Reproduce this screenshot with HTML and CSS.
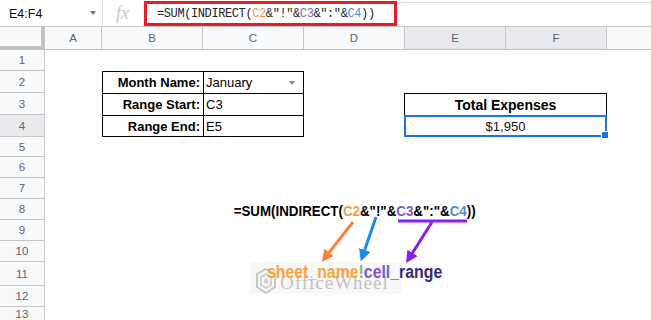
FILE: index.html
```html
<!DOCTYPE html>
<html>
<head>
<meta charset="utf-8">
<link rel="stylesheet" href="styles.css">
</head>
<body>
<div class="topbar">
  <div class="namebox"><span class="nb-text">E4:F4</span><span class="nb-caret"></span></div>
  <div class="fxbox"><span class="fx">fx</span></div>
  <div class="formula">
    <span class="ftext">=SUM(INDIRECT(<span class="c-or">C2</span>&amp;"!"&amp;<span class="c-pu">C3</span>&amp;":"&amp;<span class="c-bl">C4</span>))</span>
  </div>
</div>
<div class="sheet">
  <div class="corner"></div>
  <div class="ch">A</div>
  <div class="ch">B</div>
  <div class="ch">C</div>
  <div class="ch">D</div>
  <div class="ch sel">E</div>
  <div class="ch sel">F</div>
  <div class="ch last"></div>

  <div class="rh r1">1</div>
  <div class="rh r2">2</div>
  <div class="rh r3">3</div>
  <div class="rh r4 sel">4</div>
  <div class="rh r5">5</div>
  <div class="rh r6">6</div>
  <div class="rh r7">7</div>
  <div class="rh r8">8</div>
  <div class="rh r9">9</div>
  <div class="rh r10">10</div>
  <div class="rh r11">11</div>
  <div class="rh r12">12</div>
  <div class="rh r13">13</div>

  <div class="tc lbl row2">Month Name:</div>
  <div class="tc val vcol row2 drop">January<span class="dd"></span></div>
  <div class="tc lbl row3">Range Start:</div>
  <div class="tc val vcol row3">C3</div>
  <div class="tc lbl row4 lastrow">Range End:</div>
  <div class="tc val vcol row4 lastrow">E5</div>

  <div class="total-h">Total Expenses</div>
  <div class="total-v">$1,950<span class="handle"></span></div>

  <div class="annot">
    <div class="watermark">
      <svg class="wm-logo" width="20" height="26" viewBox="0 0 20 26">
        <path d="M10 1 L19 6 L19 19 L10 25 L1 19 L1 6 Z" fill="none" stroke="#bcbcbc" stroke-width="2"/>
        <path d="M10 6 L15 9 L15 17 L10 20 L5 17 L5 9 Z" fill="none" stroke="#c8c8c8" stroke-width="2"/>
        <path d="M10 10 L12 11.5 L12 15 L10 16 L8 15 L8 11.5 Z" fill="#cacaca"/>
      </svg>
      <span class="wm-text">OfficeWheel</span>
    </div>
    <div class="big-formula"><span class="bf-inner">=SUM(INDIRECT(<span class="b-or">C2</span>&amp;"!"&amp;<span class="b-pu">C3</span>&amp;":"&amp;<span class="b-bl">C4</span>))</span></div>
    <div class="spacer"></div>
    <div class="syntax"><span class="sx-inner"><span class="s-or">sheet</span><span class="s-or">_</span><span class="s-or">name</span><span class="s-gr">!</span><span class="s-pu">cell</span><span class="s-dk">_</span><span class="s-dk">range</span></span></div>
    <svg class="arrows" width="505" height="108" viewBox="0 0 505 108">
      <defs>
        <marker id="mo" viewBox="0 0 10 10" refX="7" refY="5" markerWidth="4" markerHeight="4" orient="auto"><path d="M0,0 L10,5 L0,10 z" fill="#fa8138"/></marker>
        <marker id="mb" viewBox="0 0 10 10" refX="7" refY="5" markerWidth="4" markerHeight="4" orient="auto"><path d="M0,0 L10,5 L0,10 z" fill="#1c87f2"/></marker>
        <marker id="mp" viewBox="0 0 10 10" refX="7" refY="5" markerWidth="4" markerHeight="4" orient="auto"><path d="M0,0 L10,5 L0,10 z" fill="#8b1df0"/></marker>
      </defs>
      <line x1="251" y1="23" x2="222" y2="60" stroke="#fa8138" stroke-width="3" marker-end="url(#mo)"/>
      <line x1="274" y1="18" x2="260" y2="59" stroke="#1c87f2" stroke-width="3" marker-end="url(#mb)"/>
      <line x1="296" y1="22" x2="365" y2="22" stroke="#8b1df0" stroke-width="3"/>
      <line x1="330" y1="23" x2="306" y2="61" stroke="#8b1df0" stroke-width="3" marker-end="url(#mp)"/>
    </svg>
  </div>
</div>
</body>
</html>
```
FILE: styles.css
```css
html, body {
  margin: 0;
  padding: 0;
  background: #ffffff;
  font-family: "Liberation Sans", Arial, sans-serif;
  width: 651px;
  height: 320px;
  overflow: hidden;
}

.topbar {
  display: flex;
  height: 27px;
  box-sizing: border-box;
  border-bottom: 1px solid #c6c6c6;
}

.namebox {
  width: 102px;
  display: flex;
  align-items: center;
  box-sizing: border-box;
  padding-left: 9px;
  padding-right: 6px;
}
.nb-text {
  font-size: 12.5px;
  color: #111;
  flex: 1;
  padding-top: 1px;
}
.nb-caret {
  width: 0;
  height: 0;
  border-left: 3.5px solid transparent;
  border-right: 3.5px solid transparent;
  border-top: 4px solid #777;
}

.fxbox {
  width: 44px;
  box-sizing: border-box;
  border-left: 1px solid #e2e2e2;
  display: flex;
  align-items: center;
  justify-content: center;
}
.fx {
  font-family: "Liberation Serif", "Times New Roman", serif;
  font-style: italic;
  font-size: 18px;
  color: #c9c9c9;
  padding-right: 4px;
}

.formula {
  flex: 1;
  position: relative;
  margin-top: 2px;
  border-top: 1px solid #e2e2e2;
  border-left: 1px solid #e2e2e2;
  display: flex;
  align-items: center;
  padding-left: 10px;
  padding-bottom: 1px;
}
.formula::after {
  content: "";
  position: absolute;
  left: -3px;
  top: -2px;
  width: 253px;
  height: 25px;
  box-sizing: border-box;
  border: 3px solid #e81c24;
}
.ftext {
  font-family: "Liberation Mono", "Courier New", monospace;
  font-size: 12px;
  color: #222;
  letter-spacing: -0.4px;
}
.c-or { color: #ef9a4c; }
.c-pu { color: #8c5ec0; }
.c-bl { color: #4b8fd9; }

.sheet {
  display: grid;
  grid-template-columns: 45px 57px 101px 101px 101px 101px 101px 1fr;
  grid-template-rows: 23px 21px 22px 22px 22px 20px 21px 21px 21px 21px 21px 24px 21px 1fr;
  height: 293px;
}

.corner {
  grid-column: 1;
  grid-row: 1;
  background: #f8f9fa;
  border-right: 4px solid #c2c2c2;
  border-bottom: 4px solid #c2c2c2;
}
.ch {
  grid-row: 1;
  background: #f8f9fa;
  box-sizing: border-box;
  border-right: 1px solid #c6c6c6;
  border-bottom: 1px solid #c2c2c2;
  font-size: 11.5px;
  color: #5f6368;
  display: flex;
  align-items: center;
  justify-content: center;
}
.ch.sel { background: #e8eaed; }
.ch.last { border-right: none; }

.rh {
  grid-column: 1;
  background: #f8f9fa;
  box-sizing: border-box;
  border-right: 1px solid #c6c6c6;
  border-bottom: 1px solid #c6c6c6;
  font-size: 11.5px;
  color: #5f6368;
  display: flex;
  align-items: center;
  justify-content: center;
}
.rh.sel { background: #e8eaed; }
.r1 { grid-row: 2; }
.r2 { grid-row: 3; }
.r3 { grid-row: 4; }
.r4 { grid-row: 5; }
.r5 { grid-row: 6; }
.r6 { grid-row: 7; }
.r7 { grid-row: 8; }
.r8 { grid-row: 9; }
.r9 { grid-row: 10; }
.r10 { grid-row: 11; }
.r11 { grid-row: 12; }
.r12 { grid-row: 13; }
.r13 { grid-row: 14; border-bottom: none; }

.tc {
  box-sizing: border-box;
  border-left: 1px solid #000;
  border-top: 1px solid #000;
  font-size: 13px;
  color: #000;
  display: flex;
  align-items: center;
}
.tc.lastrow { border-bottom: 1px solid #000; }
.lbl {
  grid-column: 3;
  font-weight: bold;
  justify-content: flex-end;
  padding-right: 3px;
}
.vcol {
  grid-column: 4;
  border-right: 1px solid #000;
  padding-left: 2px;
}
.row2 { grid-row: 3; }
.row3 { grid-row: 4; }
.row4 { grid-row: 5; }
.drop { justify-content: space-between; padding-right: 8px; }
.dd {
  width: 0;
  height: 0;
  border-left: 3.5px solid transparent;
  border-right: 3.5px solid transparent;
  border-top: 4px solid #8a8a8a;
}

.total-h {
  grid-column: 6 / 8;
  grid-row: 4;
  box-sizing: border-box;
  border: 1px solid #000;
  border-bottom: none;
  margin-left: -1px;
  font-weight: bold;
  font-size: 14px;
  color: #000;
  display: flex;
  align-items: center;
  justify-content: center;
  padding-top: 1px;
}
.total-v {
  grid-column: 6 / 8;
  grid-row: 5;
  position: relative;
  box-sizing: border-box;
  margin-left: -1px;
  border: 2px solid #1a73e8;
  font-size: 13px;
  color: #111;
  display: flex;
  align-items: center;
  justify-content: center;
}
.handle {
  position: absolute;
  right: -4px;
  bottom: -4px;
  width: 6px;
  height: 6px;
  background: #1a73e8;
  border: 1px solid #fff;
}

.annot {
  grid-column: 3 / 8;
  grid-row: 9 / 14;
  position: relative;
  display: flex;
  flex-direction: column;
  align-items: center;
}
.big-formula {
  position: relative;
  height: 21px;
  display: flex;
  align-items: center;
  justify-content: center;
  padding-top: 3px;
  box-sizing: border-box;
}
.bf-inner {
  display: inline-block;
  font-weight: bold;
  font-size: 15.5px;
  color: #000;
  transform: scaleX(0.86);
  white-space: nowrap;
}
.b-or { color: #f29a48; }
.b-pu { color: #7b5cc4; }
.b-bl { color: #4a8fdb; }

.spacer { height: 42px; }

.syntax {
  position: relative;
  height: 24px;
  display: flex;
  align-items: center;
  justify-content: center;
}
.sx-inner {
  display: inline-block;
  font-weight: bold;
  font-size: 18px;
  transform: scaleX(0.88);
  white-space: nowrap;
  margin-top: -3px;
}
.s-or { color: #f9a43e; }
.s-gr { color: #72c27a; }
.s-pu { color: #7a5ad0; }
.s-dk { color: #3a2877; }

.watermark {
  position: absolute;
  left: 148px;
  top: 63px;
  width: 152px;
  height: 32px;
  background: #f6f6f6;
  display: flex;
  align-items: center;
  gap: 4px;
  padding-left: 6px;
  box-sizing: border-box;
  opacity: 0.85;
}
.wm-logo { margin-top: 6px; }
.wm-text {
  font-family: "Liberation Serif", "Times New Roman", serif;
  font-size: 19px;
  color: #b8b8b8;
  letter-spacing: 1px;
  margin-top: 10px;
}

.arrows {
  position: absolute;
  left: 0;
  top: 0;
}
```
